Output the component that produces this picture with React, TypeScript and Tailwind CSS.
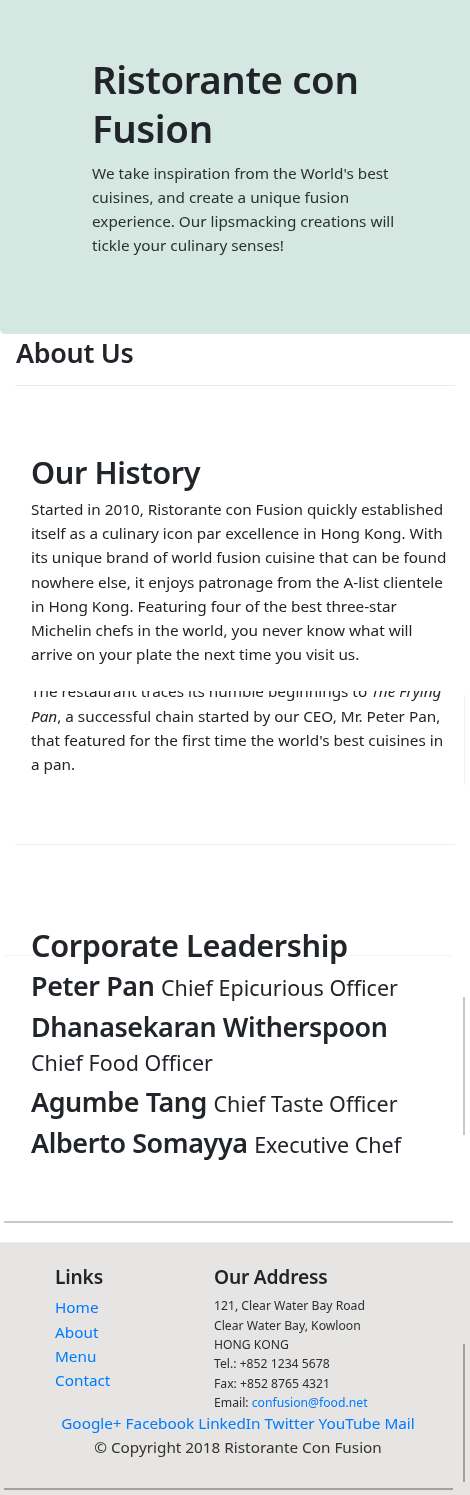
import React from "react";

const LEADERS = [
  { name: "Peter Pan", role: "Chief Epicurious Officer" },
  { name: "Dhanasekaran Witherspoon", role: "Chief Food Officer" },
  { name: "Agumbe Tang", role: "Chief Taste Officer" },
  { name: "Alberto Somayya", role: "Executive Chef" },
];

const LINKS = ["Home", "About", "Menu", "Contact"];
const SOCIAL = ["Google+", "Facebook", "LinkedIn", "Twitter", "YouTube", "Mail"];

export default function App() {
  return (
    <div className="relative w-[470px] bg-white font-['Noto_Sans',sans-serif] text-[#212529]">
      {/* Jumbotron */}
      <header className="rounded-bl-[5px] bg-[#d4e8e1] pb-[77px] pl-[92px] pr-[60px] pt-[55px]">
        <h1 className="mb-[8px] text-[38.4px] leading-[49px] font-semibold tracking-[-0.4px]">
          Ristorante con Fusion
        </h1>
        <p className="text-[15.3px] leading-[24px] text-[#2c3033]">
          We take inspiration from the World's best cuisines, and create a unique fusion
          experience. Our lipsmacking creations will tickle your culinary senses!
        </p>
      </header>

      <div className="px-[15px]">
        <h3 className="pl-[1px] pt-[2px] text-[26.9px] leading-[34px] font-semibold tracking-[-0.3px]">
          About Us
        </h3>
        <hr className="mt-[15px] border-t border-[#e9ecef]" />

        {/* History */}
        <section className="pb-[68px] pl-[16px] pr-[3px] pt-[67px]">
          <h2 className="mb-[6px] text-[30.7px] leading-[38px] font-semibold tracking-[-0.4px]">
            Our History
          </h2>
          <p className="mb-[13px] text-[15.3px] leading-[24.2px]">
            Started in 2010, Ristorante con Fusion quickly established itself as a culinary icon
            par excellence in Hong Kong. With its unique brand of world fusion cuisine that can be
            found nowhere else, it enjoys patronage from the A-list clientele in Hong Kong.
            Featuring four of the best three-star Michelin chefs in the world, you never know what
            will arrive on your plate the next time you visit us.
          </p>
          <p className="relative text-[15.3px] leading-[24.2px]">
            The restaurant traces its humble beginnings to <em>The Frying Pan</em>, a successful
            chain started by our CEO, Mr. Peter Pan, that featured for the first time the world's
            best cuisines in a pan.
            {/* top of this first line is cut off in the captured page */}
            <span className="absolute left-0 right-0 top-0 h-[12px] bg-white" />
          </p>
        </section>
        <hr className="border-t border-[#eef0f2]" />

        {/* Leadership */}
        <section className="pb-[52px] pl-[16px] pr-[30px] pt-[81px]">
          <h2 className="mb-[5px] text-[30.7px] leading-[38px] font-semibold tracking-[-0.4px]">
            Corporate Leadership
          </h2>
          {LEADERS.map((l) => (
            <h3
              key={l.name}
              className="mb-[7px] text-[26.9px] leading-[34px] font-semibold tracking-[-0.4px]"
            >
              {l.name}{" "}
              <small className="text-[21.5px] leading-[20px] font-normal tracking-normal">
                {l.role}
              </small>
            </h3>
          ))}
        </section>
      </div>

      {/* Footer */}
      <footer className="mt-[23px] border-t border-[#eeeeee] bg-[#e6e5e3] pb-[40px] pt-[22px]">
        <div className="flex">
          <div className="w-[214px] shrink-0 pl-[55px]">
            <h5 className="mb-[6px] text-[19.2px] leading-[24px] font-semibold tracking-[-0.2px]">
              Links
            </h5>
            <ul className="text-[15.3px] leading-[24.4px]">
              {LINKS.map((l) => (
                <li key={l}>
                  <a className="text-[#007bff]">{l}</a>
                </li>
              ))}
            </ul>
          </div>
          <div>
            <h5 className="mb-[7px] text-[19.2px] leading-[24px] font-semibold tracking-[-0.2px]">
              Our Address
            </h5>
            <address className="text-[12.2px] leading-[19.4px] not-italic text-[#2b2f33]">
              121, Clear Water Bay Road
              <br />
              Clear Water Bay, Kowloon
              <br />
              HONG KONG
              <br />
              Tel.: +852 1234 5678
              <br />
              Fax: +852 8765 4321
              <br />
              Email: <a className="text-[#007bff]">confusion@food.net</a>
            </address>
          </div>
        </div>
        <p className="-mt-[2px] pl-[6px] text-center text-[15.3px] leading-[24px] text-[#007bff]">
          {SOCIAL.map((s, i) => (
            <React.Fragment key={s}>
              <a>{s}</a>
              {i < SOCIAL.length - 1 ? " " : ""}
            </React.Fragment>
          ))}
        </p>
        <p className="pl-[6px] text-center text-[15.3px] leading-[24px] text-[#333]">
          © Copyright 2018 Ristorante Con Fusion
        </p>
      </footer>

      {/* scrollbar-like strokes left over in the captured page */}
      <div className="pointer-events-none absolute left-[464px] top-[695px] h-[90px] w-[1px] bg-[#f0f0f0] mix-blend-multiply" />
      <div className="pointer-events-none absolute left-[4px] top-[955px] h-[1px] w-[449px] bg-[#f4f4f4] mix-blend-multiply" />
      <div className="pointer-events-none absolute left-[463px] top-[997px] h-[138px] w-[2px] bg-[#c8c8c8] mix-blend-multiply" />
      <div className="pointer-events-none absolute left-[4px] top-[1221px] h-[2px] w-[449px] bg-[#c8c8c8] mix-blend-multiply" />
      <div className="pointer-events-none absolute left-[463px] top-[1344px] h-[138px] w-[2px] bg-[#b4b4b4] mix-blend-multiply" />
      <div className="pointer-events-none absolute left-[4px] top-[1488px] h-[2px] w-[449px] bg-[#b4b4b4] mix-blend-multiply" />
    </div>
  );
}
